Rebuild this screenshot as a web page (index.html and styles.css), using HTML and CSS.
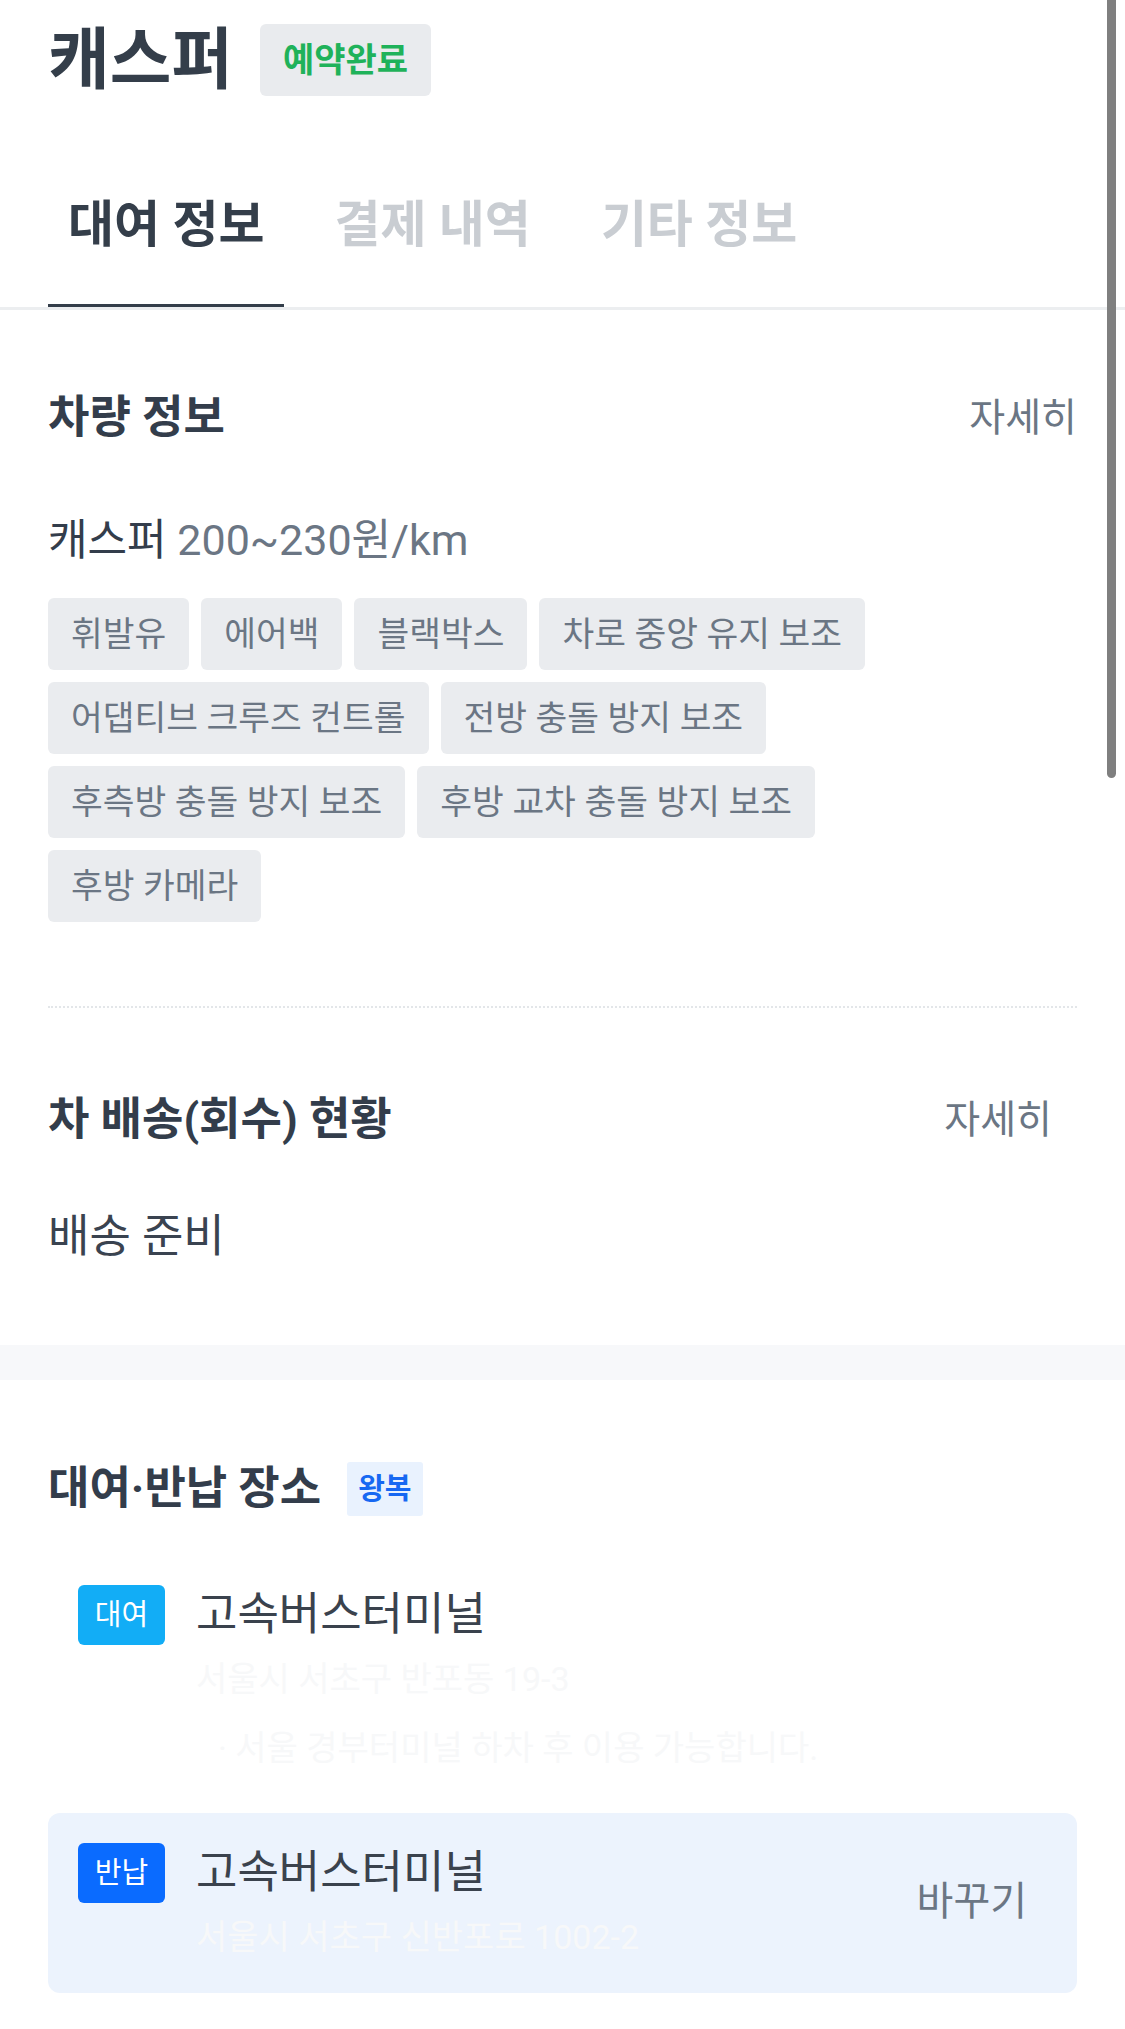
FILE: index.html
```html
<!DOCTYPE html>
<html lang="ko">
<head>
<meta charset="utf-8">
<title>캐스퍼 예약 상세</title>
<link rel="stylesheet" href="styles.css">
</head>
<body>
<div class="page">
  <header class="head">
    <h1 class="title">캐스퍼</h1>
    <span class="status">예약완료</span>
  </header>

  <nav class="tabs">
    <a class="tab tab-active">대여 정보</a>
    <a class="tab">결제 내역</a>
    <a class="tab">기타 정보</a>
  </nav>

  <section class="sec sec-car">
    <div class="sec-head">
      <h2 class="sec-title">차량 정보</h2>
      <span class="more">자세히</span>
    </div>
    <p class="car-name"><span class="model">캐스퍼</span> <span class="price">200~230원/km</span></p>
    <ul class="chips">
      <li class="chip">휘발유</li>
      <li class="chip">에어백</li>
      <li class="chip">블랙박스</li>
      <li class="chip">차로 중앙 유지 보조</li>
      <li class="chip">어댑티브 크루즈 컨트롤</li>
      <li class="chip">전방 충돌 방지 보조</li>
      <li class="chip">후측방 충돌 방지 보조</li>
      <li class="chip">후방 교차 충돌 방지 보조</li>
      <li class="chip">후방 카메라</li>
    </ul>
  </section>

  <section class="sec sec-delivery">
    <div class="sec-head">
      <h2 class="sec-title">차 배송(회수) 현황</h2>
      <span class="more more-inset">자세히</span>
    </div>
    <p class="delivery-state">배송 준비</p>
  </section>

  <div class="band"></div>

  <section class="sec sec-place">
    <div class="sec-head sec-head-left">
      <h2 class="sec-title">대여·반납 장소</h2>
      <span class="trip">왕복</span>
    </div>
    <div class="places">
      <div class="place">
        <span class="kind kind-rent">대여</span>
        <div class="place-body">
          <p class="place-name">고속버스터미널</p>
          <p class="place-addr">서울시 서초구 반포동 19-3</p>
          <p class="place-note">· 서울 경부터미널 하차 후 이용 가능합니다.</p>
        </div>
      </div>
      <div class="place place-selected">
        <span class="kind kind-return">반납</span>
        <div class="place-body">
          <p class="place-name">고속버스터미널</p>
          <p class="place-addr">서울시 서초구 신반포로 1002-2</p>
        </div>
        <span class="change">바꾸기</span>
      </div>
    </div>
  </section>
</div>
<div class="scrollbar"></div>
</body>
</html>
```

FILE: styles.css
```css
html {
  overflow: hidden;
}

body {
  margin: 0;
  background: #ffffff;
  font-family: Roboto, "Noto Sans CJK KR", sans-serif;
  color: #333d4b;
}

h1, h2, p, ul {
  margin: 0;
  padding: 0;
}

.page {
  width: 1125px;
}

/* header */
.head {
  display: flex;
  align-items: center;
  gap: 27px;
  padding: 24px 48px 0;
  height: 72px;
}

.title {
  font-size: 67px;
  font-weight: 700;
  line-height: 72px;
  color: #343e4a;
}

.status {
  display: inline-block;
  height: 72px;
  line-height: 72px;
  padding: 0 23px;
  border-radius: 6px;
  background: #e9ebee;
  color: #1fb25a;
  font-size: 34px;
  font-weight: 700;
}

/* tabs */
.tabs {
  display: flex;
  gap: 30px;
  margin-top: 99px;
  padding: 0 48px;
  border-bottom: 3px solid #eceef0;
}

.tab {
  display: block;
  padding: 0 20px 49px;
  line-height: 60px;
  font-size: 50px;
  font-weight: 700;
  color: #c9cdd2;
  border-bottom: 3px solid transparent;
}

.tab-active {
  color: #343e4a;
  border-bottom-color: #343e4a;
}

/* sections */
.sec {
  margin: 0 48px;
}

.sec-head {
  display: flex;
  align-items: center;
  justify-content: space-between;
  height: 60px;
}

.sec-head-left {
  justify-content: flex-start;
  gap: 26px;
}

.sec-title {
  font-size: 45px;
  font-weight: 700;
  line-height: 60px;
  color: #333d4b;
}

.more {
  font-size: 39px;
  line-height: 60px;
  color: #6b7684;
}

.more-inset {
  margin-right: 25px;
}

.sec-car {
  padding: 78px 0 84px;
  border-bottom: 2px dotted #e3e6e9;
}

.car-name {
  margin-top: 64px;
  font-size: 43px;
  line-height: 56px;
}

.model {
  color: #333d4b;
}

.price {
  color: #6b7684;
}

.chips {
  list-style: none;
  display: flex;
  flex-wrap: wrap;
  gap: 12px 12px;
  max-width: 940px;
  margin-top: 30px;
}

.chip {
  height: 72px;
  line-height: 72px;
  padding: 0 23px;
  border-radius: 6px;
  background: #eaecef;
  color: #6b7684;
  font-size: 34.5px;
}

.sec-delivery {
  padding: 82px 0 78px;
}

.delivery-state {
  margin-top: 57px;
  font-size: 45px;
  line-height: 60px;
  color: #3a4350;
}

.band {
  height: 35px;
  background: #f7f8fa;
}

/* places */
.sec-place {
  padding-top: 79px;
}

.trip {
  display: inline-block;
  height: 54px;
  line-height: 54px;
  padding: 0 11px;
  border-radius: 3px;
  background: #e9f2fe;
  color: #1668f2;
  font-size: 29px;
  font-weight: 700;
}

.places {
  display: flex;
  flex-direction: column;
  gap: 8px;
  margin-top: 36px;
}

.place {
  display: flex;
  align-items: flex-start;
  gap: 31px;
  padding: 30px 50px 33px 30px;
  border-radius: 12px;
}

.place-selected {
  background: #ecf3fd;
  padding-bottom: 32px;
}

.kind {
  flex: none;
  width: 87px;
  height: 60px;
  line-height: 60px;
  text-align: center;
  border-radius: 6px;
  color: #ffffff;
  font-size: 29px;
}

.kind-rent {
  background: #12adf6;
}

.kind-return {
  background: #0a6bff;
}

.place-body {
  display: flex;
  flex-direction: column;
}

.place-name {
  font-size: 45px;
  line-height: 60px;
  color: #3a424d;
}

.place-addr {
  margin-top: 10px;
  font-size: 34px;
  line-height: 48px;
  color: #f7f8f9;
}

.place-note {
  margin-top: 21px;
  padding-left: 22px;
  font-size: 34px;
  line-height: 48px;
  color: #f7f8f9;
}

.change {
  align-self: center;
  margin-left: auto;
  font-size: 40px;
  line-height: 60px;
  color: #6b7684;
}

/* overlay scrollbar */
.scrollbar {
  position: fixed;
  top: 0;
  right: 9px;
  width: 9px;
  height: 778px;
  background: #7f7f7f;
  border-radius: 0 0 5px 5px;
}
```
